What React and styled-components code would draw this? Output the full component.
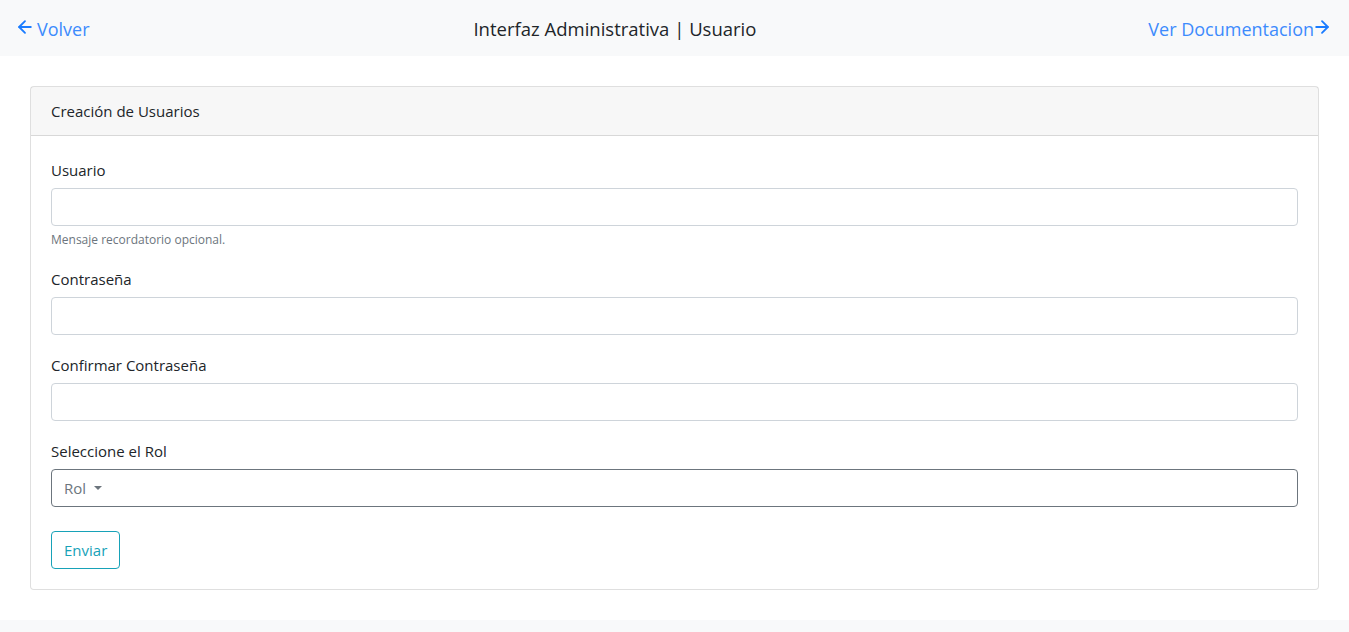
import React from "react";
import styled, { createGlobalStyle } from "styled-components";

const GlobalStyle = createGlobalStyle`
  * { box-sizing: border-box; }
  body {
    margin: 0;
    background: #fff;
    color: #212529;
    font-family: "Open Sans", "Noto Sans", sans-serif;
    font-size: 15px;
    line-height: 1.5;
  }
`;

const ArrowLeft = () => (
  <svg width="20" height="20" viewBox="0 0 24 24" fill="none" stroke="currentColor" strokeWidth="2.2" strokeLinecap="round" strokeLinejoin="round">
    <path d="m12 19-7-7 7-7" />
    <path d="M19 12H5" />
  </svg>
);

const ArrowRight = () => (
  <svg width="20" height="20" viewBox="0 0 24 24" fill="none" stroke="currentColor" strokeWidth="2.2" strokeLinecap="round" strokeLinejoin="round">
    <path d="M5 12h14" />
    <path d="m12 5 7 7-7 7" />
  </svg>
);

const fields = [
  { label: "Usuario", help: "Mensaje recordatorio opcional." },
  { label: "Contraseña", type: "password" },
  { label: "Confirmar Contraseña", type: "password" },
];

const App = () => {
  return (
    <Page>
      <GlobalStyle />
      <TopBar>
        <NavLink href="#" $iconGap="2px">
          <ArrowLeft />
          <span>Volver</span>
        </NavLink>
        <Title>Interfaz Administrativa | Usuario</Title>
        <NavLink href="#" $iconGap="-2px">
          <span>Ver Documentacion</span>
          <ArrowRight />
        </NavLink>
      </TopBar>

      <Main>
        <Card>
          <CardHeader>Creación de Usuarios</CardHeader>
          <CardBody>
            {fields.map((f) => (
              <FormGroup key={f.label}>
                <Label>{f.label}</Label>
                <Input type={f.type || "text"} />
                {f.help && <Help>{f.help}</Help>}
              </FormGroup>
            ))}
            <FormGroup>
              <Label>Seleccione el Rol</Label>
              <Select type="button">
                Rol <Caret />
              </Select>
            </FormGroup>
            <SubmitButton type="button">Enviar</SubmitButton>
          </CardBody>
        </Card>
      </Main>

      <Footer />
    </Page>
  );
};

export default App;

const Page = styled.div`
  min-height: 632px;
  display: flex;
  flex-direction: column;
`;

const TopBar = styled.header`
  height: 56px;
  background: #f8f9fa;
  padding: 0 17px 0 15px;
  display: flex;
  align-items: center;
  justify-content: space-between;
`;

const NavLink = styled.a`
  display: flex;
  align-items: center;
  color: #3d8bfd;
  text-decoration: none;
  font-size: 18px;
  padding-top: 2px;

  svg {
    color: #1a7cff;
    margin-top: -4px;
  }

  svg:first-child {
    margin-right: ${(p) => p.$iconGap || "0"};
  }

  svg:last-child {
    margin-left: ${(p) => p.$iconGap || "0"};
  }
`;

const Title = styled.h5`
  margin: 0 8px 0 0;
  font-size: 18.5px;
  font-weight: 400;
  color: #212529;
  padding-top: 2px;
`;

const Main = styled.main`
  padding: 30px;
`;

const Card = styled.section`
  border: 1px solid rgba(0, 0, 0, 0.125);
  border-radius: 4px;
  background: #fff;
`;

const CardHeader = styled.div`
  height: 49px;
  padding: 1px 20px 0;
  display: flex;
  align-items: center;
  background: rgba(0, 0, 0, 0.03);
  border-bottom: 1px solid rgba(0, 0, 0, 0.125);
  font-size: 15px;
`;

const CardBody = styled.div`
  padding: 20px;
`;

const FormGroup = styled.div`
  margin-bottom: 16px;

  &:last-of-type {
    margin-bottom: 24px;
  }
`;

const Label = styled.label`
  display: block;
  padding-top: 2px;
  margin-bottom: 6px;
  font-size: 15px;
  line-height: 24px;
`;

const Input = styled.input`
  display: block;
  width: 100%;
  height: 38px;
  padding: 6px 12px;
  border: 1px solid #ced4da;
  border-radius: 4px;
  font: inherit;
  background: #fff;
`;

const Help = styled.small`
  display: block;
  margin-top: 5px;
  font-size: 12px;
  line-height: 18px;
  color: #6c757d;
`;

const Select = styled.button`
  display: flex;
  align-items: center;
  gap: 8px;
  width: 100%;
  height: 38px;
  padding: 1px 12px 0;
  border: 1px solid #6c757d;
  border-radius: 4px;
  background: #fff;
  color: #6c757d;
  font: inherit;
  font-size: 15px;
  text-align: left;
`;

const Caret = styled.span`
  width: 0;
  height: 0;
  border-left: 4.5px solid transparent;
  border-right: 4.5px solid transparent;
  border-top: 4.5px solid #6c757d;
  margin-top: -1px;
`;

const SubmitButton = styled.button`
  height: 38px;
  padding: 1px 12px 0;
  border: 1px solid #17a2b8;
  border-radius: 4px;
  background: transparent;
  color: #17a2b8;
  font: inherit;
  font-size: 15px;
`;

const Footer = styled.footer`
  margin-top: auto;
  height: 12px;
  background: #f8f9fa;
`;
